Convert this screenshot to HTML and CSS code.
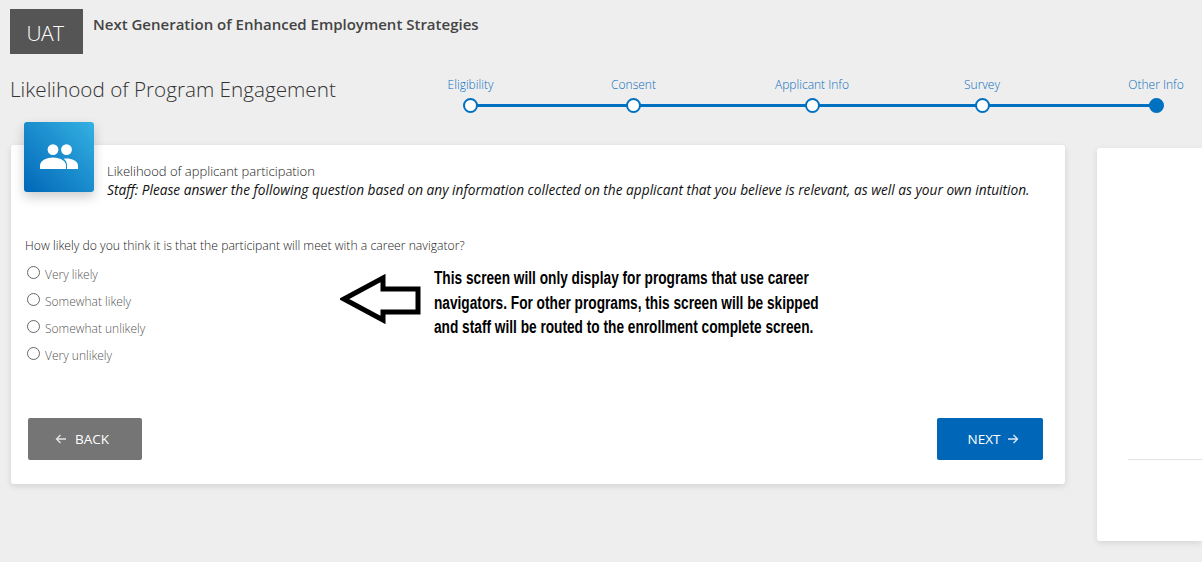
FILE: index.html
```html
<!DOCTYPE html>
<html lang="en">
<head>
<meta charset="utf-8">
<title>Likelihood of Program Engagement</title>
<link rel="stylesheet" href="styles.css">
</head>
<body>
<header class="topbar">
  <div class="env">UAT</div>
  <div class="appname">Next Generation of Enhanced Employment Strategies</div>
</header>
<section class="titlerow">
  <h1 class="pagetitle">Likelihood of Program Engagement</h1>
  <ol class="stepper">
    <li class="step"><span class="steplabel">Eligibility</span><span class="dot"></span></li>
    <li class="step"><span class="steplabel">Consent</span><span class="dot"></span></li>
    <li class="step"><span class="steplabel">Applicant Info</span><span class="dot"></span></li>
    <li class="step"><span class="steplabel">Survey</span><span class="dot"></span></li>
    <li class="step"><span class="steplabel">Other Info</span><span class="dot dot-active"></span></li>
  </ol>
</section>
<main class="content">
  <section class="card">
    <div class="cardhead">
      <div class="iconbox">
        <svg width="40" height="28" viewBox="0 0 40 28" aria-hidden="true">
          <circle cx="14" cy="5.6" r="5.4" fill="#fff"/>
          <circle cx="27.5" cy="5.6" r="5.4" fill="#fff"/>
          <path d="M1 25v-3.5C1 16.2 8 13.5 14 13.500s13 2.700 13 8V25z" fill="#fff"/>
          <path d="M28 25v-4c0-2.600-1.200-4.700-3.400-6.300 1-.2 2-.3 3-.3 5 0 11.400 2.300 11.400 7V25z" fill="#fff"/>
        </svg>
      </div>
      <div class="headtext">
        <div class="cardtitle">Likelihood of applicant participation</div>
        <div class="cardnote">Staff: Please answer the following question based on any information collected on the applicant that you believe is relevant, as well as your own intuition.</div>
      </div>
    </div>
    <p class="question">How likely do you think it is that the participant will meet with a career navigator?</p>
    <div class="cardbody">
      <div class="options">
        <label class="option"><span class="radio"></span><span class="optlabel">Very likely</span></label>
        <label class="option"><span class="radio"></span><span class="optlabel">Somewhat likely</span></label>
        <label class="option"><span class="radio"></span><span class="optlabel">Somewhat unlikely</span></label>
        <label class="option"><span class="radio"></span><span class="optlabel">Very unlikely</span></label>
      </div>
      <div class="annotation">
        <svg class="arrow" width="82" height="50" viewBox="0 0 82 50" aria-hidden="true">
          <path d="M4 25 43 4v11h35v23H43v8z" fill="#fff" stroke="#000" stroke-width="5"/>
        </svg>
        <p class="notice">This screen will only display for programs that use career<br>navigators. For other programs, this screen will be skipped<br>and staff will be routed to the enrollment complete screen.</p>
      </div>
    </div>
    <div class="actions">
      <button class="btn btn-back" type="button">
        <svg width="12" height="10" viewBox="0 0 12 10" aria-hidden="true"><path d="M11 5H1.500M5.500 1 1.500 5l4 4" fill="none" stroke="#e4e4e4" stroke-width="1.300"/></svg>
        BACK
      </button>
      <button class="btn btn-next" type="button">
        NEXT
        <svg width="12" height="10" viewBox="0 0 12 10" aria-hidden="true"><path d="M1 5h9.500M6.500 1l4 4-4 4" fill="none" stroke="#dce9f6" stroke-width="1.300"/></svg>
      </button>
    </div>
  </section>
  <aside class="sidepanel"><div class="sidedivider"></div></aside>
</main>
</body>
</html>
```
FILE: styles.css
```css
* { box-sizing: border-box; }
html, body { height: 100%; }
body {
  margin: 0;
  background: #eeeeee;
  overflow: hidden;
  font-family: "Open Sans", "Noto Sans", sans-serif;
  color: #333;
}
.topbar {
  display: flex;
  align-items: flex-start;
  padding: 9px 0 0 10px;
  height: 71px;
}
.env {
  width: 73px;
  height: 45px;
  padding-right: 3px;
  background: #555;
  color: #fff;
  font-size: 21px;
  font-weight: 300;
  line-height: 48px;
  text-align: center;
  letter-spacing: -0.6px;
}
.appname {
  margin: 5px 0 0 10px;
  font-size: 15px;
  font-weight: 600;
  line-height: 20px;
  color: #444;
}
.titlerow {
  display: flex;
  align-items: flex-start;
  height: 42px;
  padding: 0 3px 0 10px;
  justify-content: space-between;
}
.pagetitle {
  margin: 3px 0 0;
  font-size: 20.700px;
  font-weight: 300;
  line-height: 30px;
  color: #333;
}
.stepper {
  position: relative;
  list-style: none;
  margin: 7px 0 0;
  padding: 0;
  display: grid;
  grid-template-columns: 47px 279px 78px 262px 86px;
}
.stepper::before {
  content: "";
  position: absolute;
  left: 24px;
  right: 43px;
  top: 26px;
  height: 3px;
  background: #0070c0;
}
.step {
  position: relative;
  display: flex;
  flex-direction: column;
  align-items: center;
  gap: 6px;
}
.steplabel {
  font-size: 12px;
  font-weight: 300;
  line-height: 14px;
  color: #0b6fbd;
  white-space: nowrap;
}
.dot {
  width: 15px;
  height: 15px;
  border-radius: 50%;
  background: #fff;
  border: 2px solid #0070c0;
}
.dot-active { background: #0070c0; }
.content {
  display: flex;
  align-items: flex-start;
  padding: 32px 0 0 11px;
  gap: 32px;
}
.card {
  flex: 0 0 1054px;
  height: 339px;
  background: #fff;
  border-radius: 3px;
  box-shadow: 0 2px 6px rgba(0, 0, 0, 0.12);
  padding: 0 22px 0 13px;
  display: flex;
  flex-direction: column;
}
.cardhead {
  display: flex;
  align-items: flex-start;
  gap: 13px;
}
.iconbox {
  flex: none;
  width: 70px;
  height: 70px;
  margin-top: -23px;
  border-radius: 3px;
  background: linear-gradient(45deg, #0067b8, #34b1e2);
  box-shadow: 0 5px 12px rgba(0, 0, 0, 0.2);
  display: flex;
  align-items: center;
  justify-content: center;
  padding-top: 2px;
}
.headtext { padding-top: 17px; }
.cardtitle {
  font-size: 13px;
  font-weight: 300;
  line-height: 19px;
  color: #222;
}
.cardnote {
  font-size: 13.700px;
  font-style: italic;
  line-height: 19px;
  margin-top: -1px;
  color: #111;
  white-space: nowrap;
}
.question {
  margin: 37px 0 0 1px;
  font-size: 12.200px;
  font-weight: 300;
  line-height: 20px;
  color: #222;
  white-space: nowrap;
}
.cardbody {
  display: flex;
  align-items: flex-start;
  margin-top: 5px;
}
.options {
  flex: 0 0 316px;
  display: flex;
  flex-direction: column;
  padding-left: 3px;
}
.option {
  display: flex;
  align-items: center;
  gap: 5px;
  height: 27px;
}
.radio {
  width: 13px;
  height: 13px;
  border: 1px solid #666;
  border-radius: 50%;
  margin-top: -4px;
}
.optlabel {
  font-size: 12px;
  font-weight: 300;
  color: #555;
}
.annotation {
  display: flex;
  align-items: flex-start;
  margin-top: 5px;
  gap: 12px;
}
.arrow { flex: none; margin-top: 8px; }
.notice {
  margin: 0;
  font-family: "Liberation Sans", sans-serif;
  font-weight: 700;
  font-size: 18px;
  line-height: 24.500px;
  color: #000;
  white-space: nowrap;
  transform: scaleX(0.76);
  transform-origin: left top;
}
.actions {
  display: flex;
  justify-content: space-between;
  margin-top: auto;
  margin-bottom: 24px;
  padding-left: 4px;
}
.btn {
  width: 114px;
  height: 42px;
  border: 0;
  border-radius: 2px;
  font-family: inherit;
  font-size: 13.500px;
  color: #fff;
  display: flex;
  align-items: center;
  justify-content: center;
  gap: 8px;
}
.btn-back { background: #757575; padding-right: 12px; }
.btn-next { width: 106px; background: #0067b8; gap: 7px; padding-left: 13px; }
.sidepanel {
  flex: 1;
  height: 393px;
  margin-top: 3px;
  background: #fff;
  border-radius: 3px 0 0 3px;
  box-shadow: 0 2px 6px rgba(0, 0, 0, 0.1);
  padding: 311px 0 0 31px;
}
.sidedivider { height: 1px; background: #e2e2e2; }
```
